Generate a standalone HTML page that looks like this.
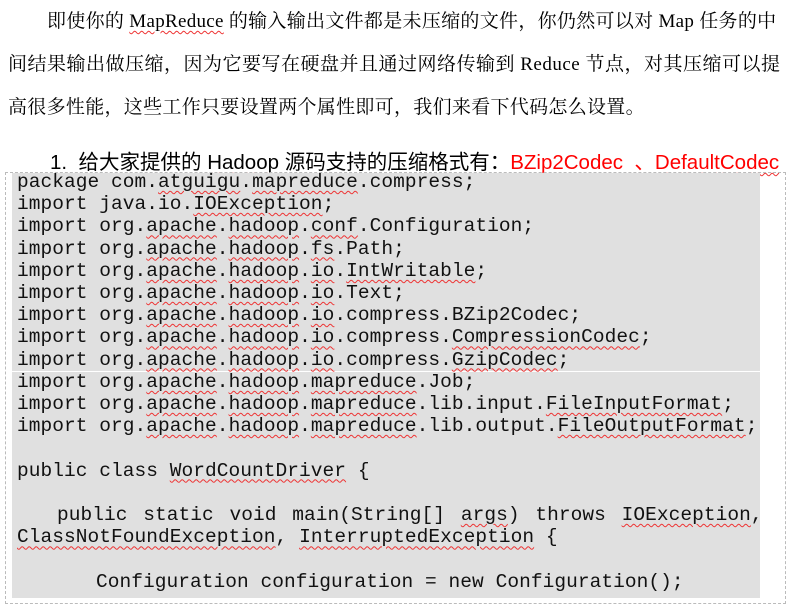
<!DOCTYPE html>
<html><head><meta charset="utf-8"><style>
body{margin:0;width:789px;height:598px;background:#fff;overflow:hidden;position:relative}
.p{position:absolute;left:8px;font-family:"Liberation Serif","Noto Serif CJK SC",serif;font-size:19px;color:#000;white-space:nowrap;letter-spacing:0.3px}
.h{position:absolute;left:50px;top:145px;font-family:"Liberation Sans","Noto Sans CJK SC",sans-serif;font-size:20.5px;white-space:nowrap}
.r{color:#f00}
.box{position:absolute;left:5px;top:172px;width:779px;height:430px;border:1px dashed #bbb}
.gray{position:absolute;left:12px;top:173px;width:748px;height:425px;background:#e0e0e0}
.sep{position:absolute;left:12px;top:371px;width:773px;height:1px;background:#fff}
.code{position:absolute;left:17px;top:171px;font-family:"Liberation Mono",monospace;font-size:19.5px;line-height:22.2px;white-space:pre;color:#111;letter-spacing:0.05px}
u{text-decoration:underline wavy #e33;text-decoration-thickness:1px;text-underline-offset:3px}
</style></head><body>
<div class="p" style="top:6px;left:47px">即使你的 <u>MapReduce</u> 的输入输出文件都是未压缩的文件，你仍然可以对 Map 任务的中</div>
<div class="p" style="top:49px;letter-spacing:0.5px">间结果输出做压缩，因为它要写在硬盘并且通过网络传输到 Reduce 节点，对其压缩可以提</div>
<div class="p" style="top:92px">高很多性能，这些工作只要设置两个属性即可，我们来看下代码怎么设置。</div>
<div class="h">1.&nbsp;&nbsp;给大家提供的 <u>Hadoop</u> 源码支持的压缩格式有：<span class="r">BZip2Codec &nbsp;、<u>DefaultCodec</u></span></div>
<div class="box"></div>
<div class="gray"></div>
<div class="sep"></div>
<div class="code">package com.<u>atguigu</u>.<u>mapreduce</u>.compress;
import java.io.<u>IOException</u>;
import org.<u>apache</u>.<u>hadoop</u>.<u>conf</u>.Configuration;
import org.<u>apache</u>.<u>hadoop</u>.<u>fs</u>.Path;
import org.<u>apache</u>.<u>hadoop</u>.<u>io</u>.<u>IntWritable</u>;
import org.<u>apache</u>.<u>hadoop</u>.<u>io</u>.Text;
import org.<u>apache</u>.<u>hadoop</u>.<u>io</u>.compress.BZip2Codec;
import org.<u>apache</u>.<u>hadoop</u>.<u>io</u>.compress.<u>CompressionCodec</u>;
import org.<u>apache</u>.<u>hadoop</u>.<u>io</u>.compress.<u>GzipCodec</u>;
import org.<u>apache</u>.<u>hadoop</u>.<u>mapreduce</u>.Job;
import org.<u>apache</u>.<u>hadoop</u>.<u>mapreduce</u>.lib.input.<u>FileInputFormat</u>;
import org.<u>apache</u>.<u>hadoop</u>.<u>mapreduce</u>.lib.output.<u>FileOutputFormat</u>;

public class <u>WordCountDriver</u> {

<span style="padding-left:40px;word-spacing:4px">public static void main(String[] <u>args</u>) throws <u>IOException</u>,</span>
<u>ClassNotFoundException</u>, <u>InterruptedException</u> {

<span style="padding-left:79px">Configuration configuration = new Configuration();</span></div>
</body></html>
